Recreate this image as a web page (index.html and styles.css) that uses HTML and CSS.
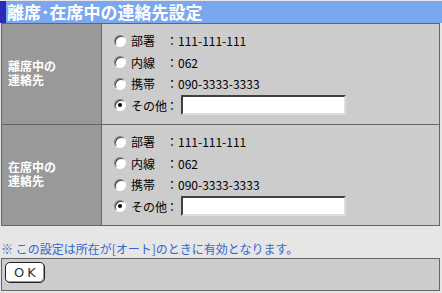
FILE: index.html
```html
<!DOCTYPE html>
<html lang="ja">
<head>
  <meta charset="UTF-8">
  <title>離席・在席中の連絡先設定</title>
  <link rel="stylesheet" href="styles.css">
</head>
<body>

  <h2 class="title">離席･在席中の連絡先設定</h2>

  <div class="panel">
    <div class="section">
      <div class="label"><span>離席中の</span><span>連絡先</span></div>
      <div class="opts">
        <label class="opt"><span class="radio"></span><span class="name">部署</span><span class="colon">：</span>111-111-111</label>
        <label class="opt"><span class="radio"></span><span class="name">内線</span><span class="colon">：</span>062</label>
        <label class="opt"><span class="radio"></span><span class="name">携帯</span><span class="colon">：</span>090-3333-3333</label>
        <label class="opt"><span class="radio checked"></span><span class="name">その他</span><span class="colon">：</span><input type="text" class="field"></label>
      </div>
    </div>
    <div class="section">
      <div class="label"><span>在席中の</span><span>連絡先</span></div>
      <div class="opts">
        <label class="opt"><span class="radio"></span><span class="name">部署</span><span class="colon">：</span>111-111-111</label>
        <label class="opt"><span class="radio"></span><span class="name">内線</span><span class="colon">：</span>062</label>
        <label class="opt"><span class="radio"></span><span class="name">携帯</span><span class="colon">：</span>090-3333-3333</label>
        <label class="opt"><span class="radio checked"></span><span class="name">その他</span><span class="colon">：</span><input type="text" class="field"></label>
      </div>
    </div>
  </div>

  <p class="note">※ この設定は所在が[オート]のときに有効となります。</p>

  <div class="actions">
    <button class="btn">OK</button>
  </div>

</body>
</html>
```

FILE: styles.css
```css
body {
  margin: 0;
  padding-top: 1px;
  background-color: #e6e6e6;
  font-family: "Noto Sans CJK JP", "Noto Sans", sans-serif;
  font-size: 12px;
  color: #000;
}

.title {
  margin: 0;
  height: 22px;
  line-height: 22px;
  padding-left: 1px;
  border-left: 6px solid #2a2ab4;
  background: #7ba7ef;
  color: #fff;
  font-size: 17px;
  font-weight: bold;
}

.panel {
  margin-left: 1px;
  width: 439px;
  box-sizing: border-box;
  border: 1px solid #666;
  background: #ccc;
}

.section {
  display: flex;
  height: 100px;
}

.section + .section {
  border-top: 1px solid #666;
}

.label {
  width: 100px;
  box-sizing: border-box;
  border-right: 1px solid #666;
  background: #999;
  color: #fff;
  font-family: "Liberation Sans", "Noto Sans CJK JP", sans-serif;
  font-weight: bold;
  padding-left: 6px;
  display: flex;
  flex-direction: column;
  justify-content: center;
}

.label span {
  display: block;
  height: 14px;
  line-height: 14px;
}

.opts {
  display: flex;
  flex-direction: column;
  padding: 6px 0 0 12px;
}

.opt {
  display: flex;
  align-items: center;
  height: 21.5px;
}

.radio {
  width: 12px;
  height: 12px;
  box-sizing: border-box;
  border-radius: 50%;
  border: 1px solid #808080;
  border-right-color: #fff;
  border-bottom-color: #fff;
  background: #fff;
  box-shadow: inset 1px 1px 0 #404040;
  margin-right: 5px;
  position: relative;
}

.radio.checked::after {
  content: "";
  position: absolute;
  left: 3px;
  top: 3px;
  width: 4px;
  height: 4px;
  border-radius: 50%;
  background: #000;
}

.name {
  width: 35px;
  white-space: nowrap;
}

.colon {
  width: 12px;
  text-align: center;
}

.field {
  margin: 0 0 0 3px;
  width: 165px;
  height: 20px;
  box-sizing: border-box;
  border: 2px solid #404040;
  border-right-color: #ddd;
  border-bottom-color: #ddd;
  background: #fff;
  padding: 0 2px;
}

.note {
  margin: 13px 0 0 1px;
  height: 19px;
  color: #3366cc;
  line-height: 19px;
}

.actions {
  margin-left: 1px;
  width: 439px;
  height: 33px;
  box-sizing: border-box;
  border: 1px solid #666;
  background: #ccc;
  padding: 3px 0 0 3px;
}

.btn {
  width: 40px;
  height: 21px;
  padding: 0;
  border: 1px solid #222;
  border-radius: 5px;
  background: #fff;
  box-shadow: inset -1px -1px 0 #999;
  font-family: "DejaVu Sans", sans-serif;
  font-size: 13px;
  letter-spacing: 3px;
  text-indent: 3px;
  color: #333;
}
```
